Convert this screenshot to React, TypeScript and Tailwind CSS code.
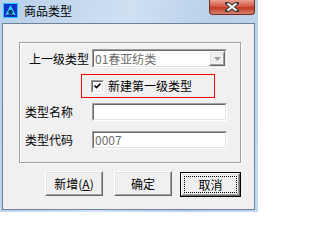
import React from 'react';

const font = "font-['SimSun','Noto_Sans_CJK_SC',sans-serif]";

function Sunken({ className, children }: { className?: string; children?: React.ReactNode }) {
    return (
        <div className={`border border-t-[#a0a0a0] border-l-[#a0a0a0] border-b-white border-r-white ${className ?? ''}`}>
            <div className="h-full w-full border border-t-[#696969] border-l-[#696969] border-b-[#e3e3e3] border-r-[#e3e3e3] bg-white flex items-center">
                {children}
            </div>
        </div>
    );
}

function Raised({ className, children }: { className?: string; children?: React.ReactNode }) {
    return (
        <div className={`border border-t-white border-l-white border-b-[#696969] border-r-[#696969] ${className ?? ''}`}>
            <div className="h-full w-full border border-t-[#e3e3e3] border-l-[#e3e3e3] border-b-[#a0a0a0] border-r-[#a0a0a0] bg-[#f0f0f0] flex items-center justify-center">
                {children}
            </div>
        </div>
    );
}

export default function App() {
    return (
        <div className={`w-[258px] h-[212px] overflow-hidden bg-[linear-gradient(100deg,#b8d0ea_0%,#cfe0f2_45%,#b6cfe9_75%,#c4d8ee_100%)] text-[12px] leading-none text-black ${font}`}>
            {/* Title bar */}
            <div className="h-[23px] flex">
                <div className="ml-[3px] mt-[3px] w-[15px] h-[15px]">
                    <svg width="15" height="15" viewBox="0 0 15 15">
                        <rect x="0.5" y="0.5" width="14" height="14" fill="#1030d0" stroke="#20c8ff" />
                        <path d="M7.5 2 L12.5 12 L2.5 12 Z" fill="#30d8f0" />
                        <circle cx="7.5" cy="9" r="2.2" fill="#103070" />
                        <path d="M4 12 L11 12" stroke="#0a1a60" strokeWidth="1" />
                    </svg>
                </div>
                <div className="ml-[6px] mt-[5px] text-[12px]">商品类型</div>
                <div className="flex-1" />
                <div className="mr-[3px] w-[46px] h-[15px] rounded-b-[4px] border border-t-0 border-[#7a2a22] bg-[linear-gradient(180deg,#e8a090_0%,#d45a44_45%,#c03a22_55%,#d8806a_100%)] flex items-center justify-center">
                    <svg width="14" height="10" viewBox="0 0 14 10">
                        <path d="M2 1 L12 9 M12 1 L2 9" stroke="#3a3a3a" strokeWidth="4" strokeLinecap="square" />
                        <path d="M2.5 1.5 L11.5 8.5 M11.5 1.5 L2.5 8.5" stroke="#ffffff" strokeWidth="2" />
                    </svg>
                </div>
            </div>

            {/* Client area */}
            <div className="ml-[2px] w-[253px] h-[187px] border border-[#6f8198] bg-[#f0f0f0]">
                {/* Group box */}
                <div className="mt-[18px] ml-[16px] w-[222px] h-[121px] border border-[#a0a0a0] shadow-[inset_1px_1px_0_#fff,1px_1px_0_#fff]">
                    <div className="mt-[6px] flex items-center h-[19px]">
                        <div className="ml-[9px] w-[63px]">上一级类型</div>
                        <Sunken className="w-[135px] h-[19px]">
                            <span className="ml-[1px] flex-1 text-[#6d6d6d]">01春亚纺类</span>
                            <Raised className="w-[16px] h-[15px]">
                                <svg width="7" height="4" viewBox="0 0 7 4">
                                    <path d="M0 0 L7 0 L3.5 4 Z" fill="#a0a0a0" />
                                </svg>
                            </Raised>
                        </Sunken>
                    </div>

                    <div className="mt-[6px] ml-[61px] w-[134px] h-[24px] border border-[#ff0000] flex items-center">
                        <div className="ml-[9px] w-[13px] h-[13px] border border-t-[#a0a0a0] border-l-[#a0a0a0] border-b-white border-r-white">
                            <div className="w-full h-full border border-t-[#696969] border-l-[#696969] border-b-[#e3e3e3] border-r-[#e3e3e3] bg-white">
                                <svg width="9" height="9" viewBox="0 0 9 9" className="block">
                                    <path d="M1.5 3.5 L3.5 5.5 L7.5 1.5" stroke="#000" strokeWidth="1.6" fill="none" />
                                </svg>
                            </div>
                        </div>
                        <span className="ml-[4px]">新建第一级类型</span>
                    </div>

                    <div className="mt-[5px] flex items-center h-[18px]">
                        <div className="ml-[5px] w-[67px]">类型名称</div>
                        <Sunken className="w-[135px] h-[18px]" />
                    </div>

                    <div className="mt-[10px] flex items-center h-[18px]">
                        <div className="ml-[5px] w-[67px]">类型代码</div>
                        <Sunken className="w-[135px] h-[18px]">
                            <span className="ml-[1px] text-[#6d6d6d]">0007</span>
                        </Sunken>
                    </div>
                </div>

                {/* Buttons */}
                <div className="mt-[8px] ml-[42px] flex items-start">
                    <Raised className="w-[58px] h-[25px]">
                        <span>新增(<u>A</u>)</span>
                    </Raised>
                    <Raised className="ml-[11px] w-[58px] h-[25px]">
                        <span>确定</span>
                    </Raised>
                    <div className="ml-[8px] mt-[1px] w-[61px] h-[25px] border border-black">
                        <Raised className="w-full h-full">
                            <div className="w-[53px] h-[17px] border border-dotted border-black flex items-center justify-center">
                                取消
                            </div>
                        </Raised>
                    </div>
                </div>
            </div>
        </div>
    );
}
